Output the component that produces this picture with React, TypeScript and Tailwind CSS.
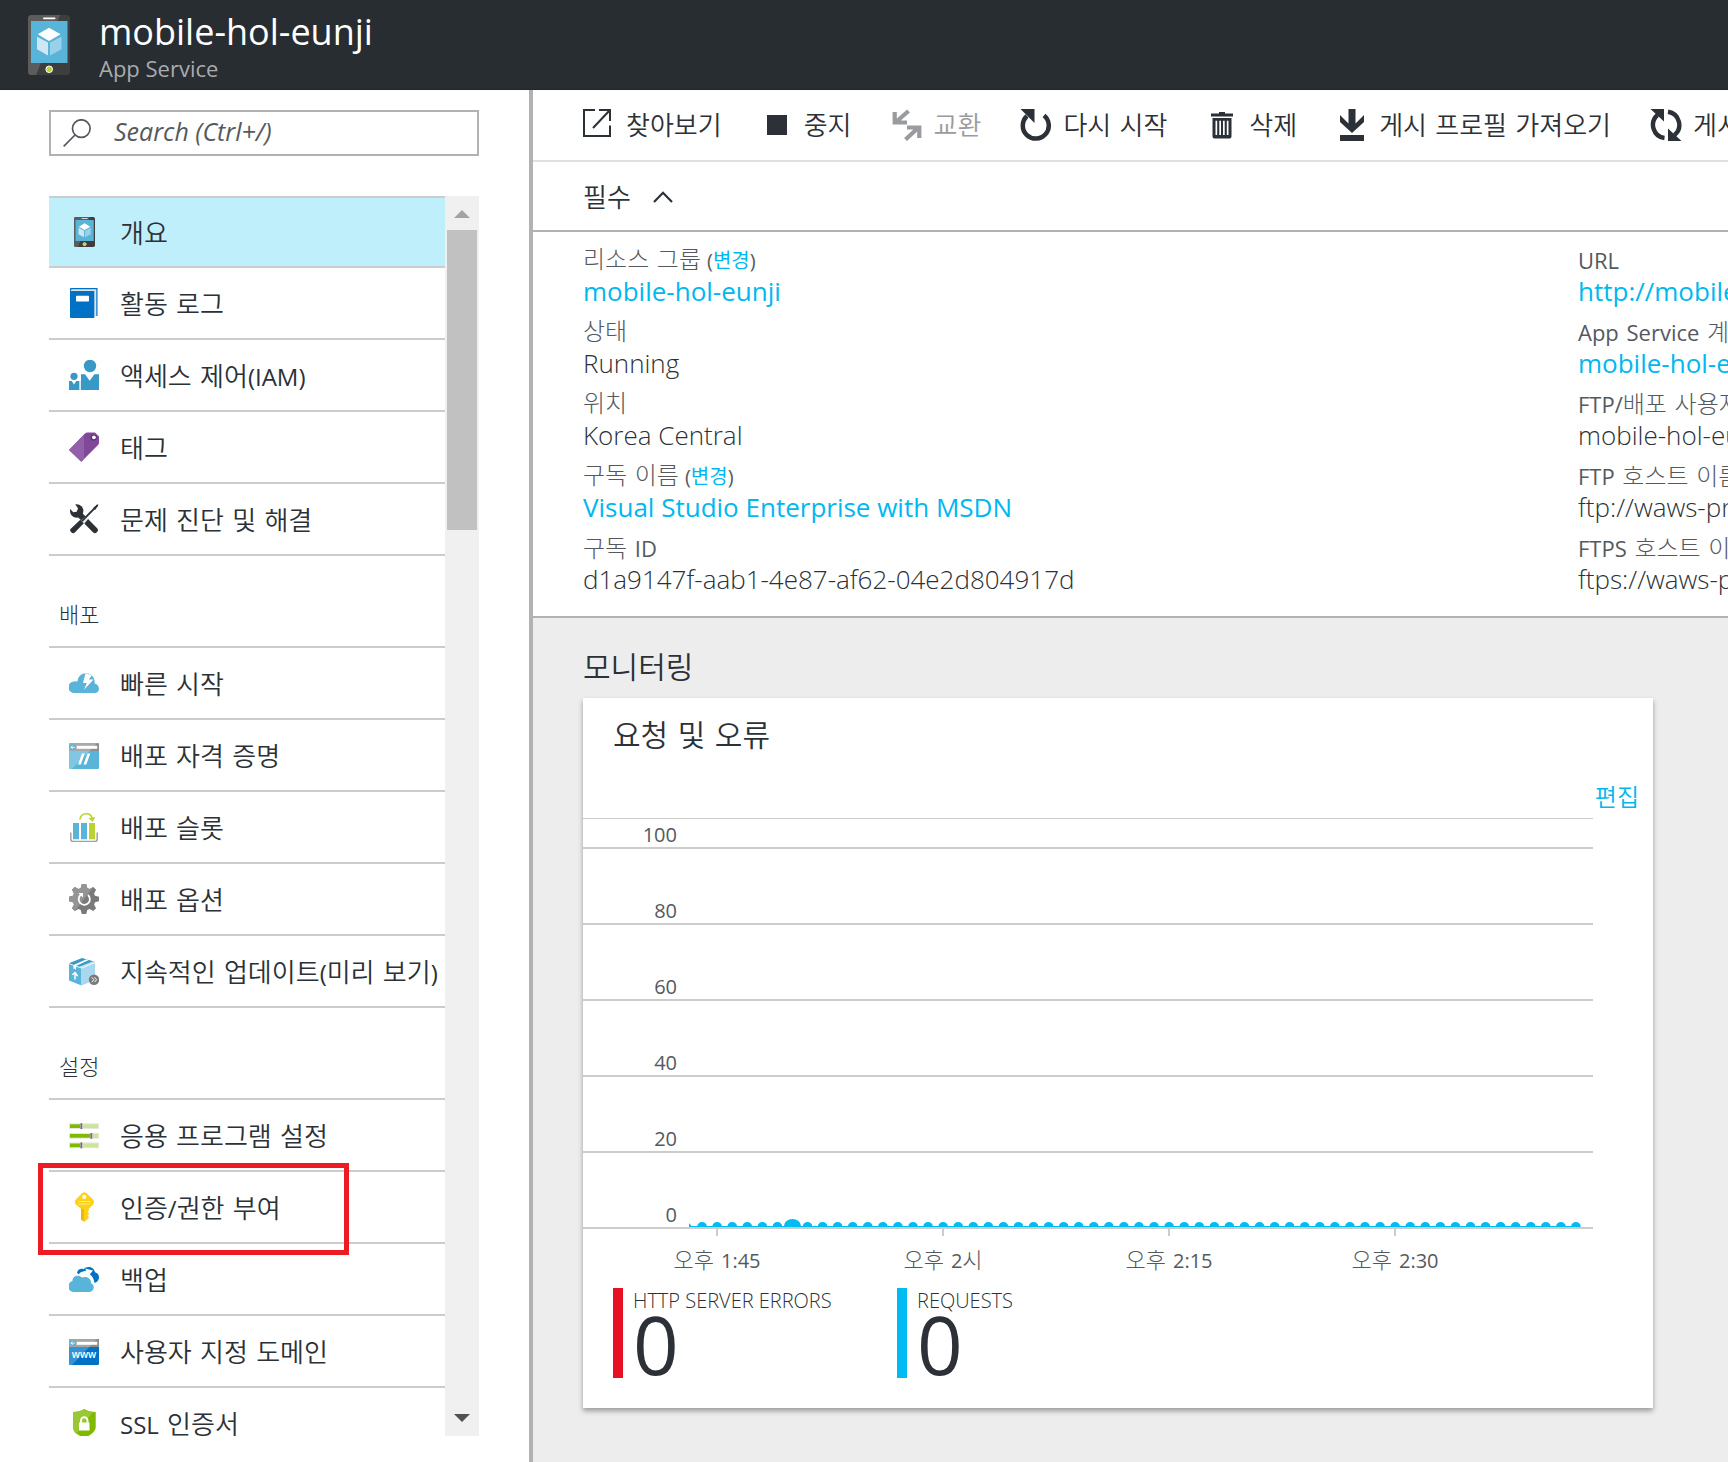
import React, { type ReactNode } from "react";

const HANGUL = "font-['DejaVu_Sans','Noto_Sans_CJK_KR',sans-serif]";
const LATIN = "font-['Open_Sans','Noto_Sans_CJK_KR',sans-serif]";

/* Hangul runs keep the parent's size; Latin runs take the size given in `latin`. */
function Mixed({ text, latin }: { text: string; latin: string }) {
  return (
    <>
      {text.split(/([A-Za-z0-9(),/:.-]+)/).map((part, i) =>
        i % 2 ? (
          <span key={i} className={`font-normal ${LATIN} ${latin}`}>
            {part}
          </span>
        ) : (
          part
        ),
      )}
    </>
  );
}

/* ---------- service icons ---------- */

function PhoneIcon({ className }: { className: string }) {
  return (
    <svg viewBox="0 0 42 60" className={className} aria-hidden="true">
      <rect width="42" height="60" rx="3.5" fill="#3e3e3e" />
      <path d="M3.5 0H32L8 60H3.5A3.5 3.5 0 0 1 0 56.5V3.5A3.5 3.5 0 0 1 3.5 0Z" fill="#5c5c5c" />
      <rect x="15" y="2.4" width="12.5" height="1.8" rx=".9" fill="#fff" />
      <rect x="3" y="6" width="36.5" height="42" fill="#59b4d9" />
      <path d="M21 12.7 32.6 19.3 21 26 9.8 19.3Z" fill="#fff" />
      <path d="M9 21.7 20 27.6V40.5L9 34.3Z" fill="#cde8f4" />
      <path d="M33.5 21.7 22 27.6V40.5L33.5 34.3Z" fill="#9ad1e8" />
      <circle cx="21.2" cy="54.3" r="3.3" fill="#b8d432" stroke="#fff" strokeWidth="1" />
    </svg>
  );
}

function Icon30({ children }: { children: ReactNode }) {
  return (
    <svg viewBox="0 0 30 30" className="h-[30px] w-[30px]" aria-hidden="true">
      {children}
    </svg>
  );
}

const icons: Record<string, ReactNode> = {
  phone: <PhoneIcon className="h-[30px] w-[21px]" />,
  book: (
    <Icon30>
      <path d="M2 0H28.500V28H26V3H1V1A1 1 0 0 1 2 0Z" fill="#0072c6" />
      <path d="M2.500 1.200H27.300V28.300H24V3H1.500Z" fill="#dfe3e6" />
      <path d="M1 2.500 2.500 3H25.300V30H2A1 1 0 0 1 1 29Z" fill="#0072c6" />
      <rect x="7" y="7.700" width="13" height="5.800" rx=".8" fill="#fff" />
    </Icon30>
  ),
  people: (
    <Icon30>
      <g fill="#3999c6">
        <circle cx="21" cy="6" r="6.200" />
        <circle cx="5" cy="16.300" r="3.600" />
        <path d="M12 14.300H16L20.700 20.800 25.300 14.300H30V30H12Z" />
        <path d="M0 21H2.800L5 24.500 7.300 21H10V30H0Z" />
      </g>
      <path d="M10 21H11.500V30H10Z" fill="#b5dcee" />
    </Icon30>
  ),
  tag: (
    <Icon30>
      <path d="M0 18 16 1.500Q17 .4 18.500 .4H26L30 4.500V10.500Q30 12 29 13L12.300 29.700Z" fill="#804998" />
      <path d="M0 18 15 2.500V27L12.300 29.700Z" fill="#9160a8" />
      <circle cx="24.700" cy="5.500" r="3.100" fill="#5b2f73" />
      <circle cx="24.900" cy="5.300" r="1.900" fill="#fff" />
    </Icon30>
  ),
  tools: (
    <Icon30>
      <path d="M8.500 8.500 25.800 26" stroke="#2b3137" strokeWidth="6" strokeLinecap="round" fill="none" />
      <circle cx="7.700" cy="7" r="6.700" fill="#2b3137" />
      <path d="M0 3.500V0H6L9 4.300 7.700 7.800 4.200 8.200Z" fill="#fff" />
      <path d="M19.300 10 23.500 9.700 15 20 12.300 16Z" fill="#fff" opacity=".9" />
      <path d="M28.600 1.200 13 17" stroke="#2b3137" strokeWidth="1.800" fill="none" />
      <path d="M29 .7 24.500 4 26 5.600Z" fill="#2b3137" stroke="#2b3137" strokeWidth=".8" />
      <path d="M11.300 15.800 14.800 19.300 5.800 28.600Q4 30.200 2 28 .3 26 1.800 24.800Z" fill="#2b3137" />
    </Icon30>
  ),
  quick: (
    <Icon30>
      <path
        d="M5.500 25A5.800 5.800 0 0 1 5 13.400Q6.800 13 8.500 13.600C8.800 8.500 12.500 5.300 17 5.300 22 5.300 26.200 9 25.700 15.600 28.300 16.200 30 18.500 30 20.700 30 23 28.300 25 26 25Z"
        fill="#59b4d9"
      />
      <path d="M16.500 5.300 23 7 19.800 11.500H24.500L15 21.700 17.800 15H14Z" fill="#fff" />
    </Icon30>
  ),
  browser: (
    <Icon30>
      <rect y="3.300" width="30" height="25.700" rx="1" fill="#59b4d9" />
      <path d="M1 3.300H29A1 1 0 0 1 30 4.300V11H0V4.300A1 1 0 0 1 1 3.300Z" fill="#8c8d8e" />
      <path d="M1 3.300H28L3 29H1A1 1 0 0 1 0 28V4.300A1 1 0 0 1 1 3.300Z" fill="#fff" opacity=".25" />
      <rect x="7.700" y="5.800" width="20.500" height="3" fill="#fff" />
      <circle cx="3.700" cy="7.300" r="3" fill="#59b4d9" />
      <path d="M5.700 7.300H2M3.700 5.600 2 7.300 3.700 9" stroke="#fff" strokeWidth=".9" fill="none" />
      <path d="M13 13.500H15.800L11.800 24.500H9Z M18.500 13.500H21.300L17.300 24.500H14.500Z" fill="#fff" />
    </Icon30>
  ),
  slots: (
    <Icon30>
      <path d="M1.800 20.500V27Q1.800 29.600 4.400 29.600H25.600Q28.200 29.600 28.200 27V20.500" stroke="#a0a1a2" strokeWidth="1.500" fill="none" />
      <path d="M4 11H10V27.300H4ZM12 11H18V27.300H12Z" fill="#59b4d9" />
      <rect x="20" y="11" width="6" height="16.300" fill="#b8d432" />
      <path d="M11 7.500C12 -.2 22 .2 23 6.500" stroke="#b8d432" strokeWidth="1.700" fill="none" />
      <path d="M19.600 6.200 26.400 5 23.600 10Z" fill="#b8d432" />
    </Icon30>
  ),
  gear: (
    <Icon30>
      <path
        d="M12.800 0H17.200L18.300 4 20.600 5 24.300 3 27.100 5.700 25.100 9.500 26 11.700 30 12.800V17.200L26 18.300 25.100 20.500 27.100 24.300 24.300 27.100 20.600 25.100 18.300 26 17.200 30H12.800L11.700 26 9.500 25.100 5.700 27.100 3 24.300 5 20.500 4 18.300 0 17.200V12.800L4 11.700 5 9.500 3 5.700 5.700 3 9.500 5 11.700 4Z"
        fill="#7a7a7a"
      />
      <path
        d="M12.800 0H17.200L18.300 4 20.600 5 24.300 3 5.700 27.100 3 24.300 5 20.500 4 18.300 0 17.200V12.800L4 11.700 5 9.500 3 5.700 5.700 3 9.500 5 11.700 4Z"
        fill="#949494"
      />
      <path d="M11.800 10.800A5.600 5.600 0 1 0 19 11" stroke="#fff" strokeWidth="1.800" fill="none" />
      <path d="M9.300 9H14V13.500Z" fill="#fff" />
    </Icon30>
  ),
  box: (
    <Icon30>
      <path d="M0 8 12.500 12.500V29.500L0 24.500Z" fill="#59b4d9" />
      <path d="M12.500 12.500 26 7V24L12.500 29.500Z" fill="#a9d8ee" />
      <path d="M0 7.300 13 2 26 5.800 12.500 11.500Z" fill="#3999c6" />
      <path d="M4.500 9 17.500 3.300 19.800 4 7 9.900V14L5.800 12.500 4.500 13Z" fill="#fff" />
      <path d="M10.200 10.800 24 5.200 26 5.800 12.500 11.500Z" fill="#fff" opacity=".7" />
      <path d="M6 23.500V17.500M3.300 18.800 6 16.500 8.700 20.300" stroke="#fff" strokeWidth="1.500" fill="none" />
      <circle cx="25" cy="23.700" r="5.200" fill="#7a7a7a" />
      <path d="M22.800 21.300 24.800 23.700 22.800 26.100M25.600 21.300 27.600 23.700 25.600 26.100" stroke="#fff" strokeWidth="1" fill="none" />
    </Icon30>
  ),
  sliders: (
    <Icon30>
      {[
        [3.3, 12],
        [13, 22],
        [22.5, 12],
      ].map(([y, x]) => (
        <g key={y}>
          <rect y={y} width="30" height="5.700" fill="#e3e8d8" />
          <rect x="1" y={y + 1} width={x - 2} height="3.700" fill="#7fba00" />
          <rect x={x + 2} y={y + 1} width={27 - x} height="3.700" fill="#cbe49a" />
          <rect x={x - 1} y={y} width="2.600" height="5.700" fill="#b5b5b5" />
          <rect x={x - 0.3} y={y} width="1.300" height="5.700" fill="#6e6e6e" />
        </g>
      ))}
    </Icon30>
  ),
  key: (
    <Icon30>
      <path d="M13 1.200Q15.300 -.6 17.600 1.200L24.200 7.700Q25.500 9.500 24.400 12.300L19.800 16.800V18.500L18.500 19.800 19.800 21V22.500L18.500 23.500 19.800 25V26L15.300 30 12 27.500V16.800L6.600 12.300Q5.200 9.500 6.600 7.700Z" fill="#fcd116" />
      <path d="M12 17H14.700V29.300L12 27.500Z" fill="#f3b300" />
      <circle cx="15.300" cy="4.900" r="2.100" fill="#fff" />
      <path d="M9.500 9.500H21.300M9.500 12H21.300" stroke="#fff" strokeWidth="1" opacity=".6" />
    </Icon30>
  ),
  backup: (
    <Icon30>
      <path d="M8 9C8.500 5.500 12 4 14.700 5.200 17 2 24.500 1.500 26 8.200 29.500 9 31 13 29.300 16 28 19 24 19.500 22 19Z" fill="#0072c6" />
      <path d="M7.500 14C9.500 8.500 14 7 17.500 6.800L16 4.500 24 6.500 19.500 12 18.700 9.500C22 10 25 14 25.500 19L23 22Z" fill="#fff" />
      <path d="M5.500 28A5.600 5.600 0 0 1 3.500 17C3 12.500 9 9.800 13 13.500 18.500 11.500 22.500 15 22 19.200 24.300 20 24.800 22 24.800 23.500 24.600 26.300 22.300 28 20 28Z" fill="#59b4d9" />
    </Icon30>
  ),
  www: (
    <Icon30>
      <rect y="3" width="30" height="26" rx="1" fill="#0072c6" />
      <path d="M1 3H29A1 1 0 0 1 30 4V11H0V4A1 1 0 0 1 1 3Z" fill="#8c8d8e" />
      <path d="M1 3H28L3 29H1A1 1 0 0 1 0 28V4A1 1 0 0 1 1 3Z" fill="#fff" opacity=".22" />
      <rect x="7.700" y="5.800" width="20.500" height="3" fill="#fff" />
      <circle cx="3.700" cy="7.200" r="3" fill="#59b4d9" />
      <path d="M5.700 7.200H2M3.700 5.500 2 7.200 3.700 8.900" stroke="#fff" strokeWidth=".9" fill="none" />
      <text x="15" y="22" textAnchor="middle" fill="#fff" fontSize="10" fontWeight="600" fontFamily="'Open Sans', sans-serif">
        www
      </text>
    </Icon30>
  ),
  shield: (
    <Icon30>
      <path d="M4 4Q11 4 15.300 1 19.600 4 26.700 4V19C26.700 24.500 20 28 15.300 29.800 10.500 28 4 24.500 4 19Z" fill="#7fba00" />
      <path d="M4 4Q11 4 15.300 1 19.600 4 24 4L7 26Q4 23 4 19Z" fill="#99c932" />
      <rect x="10" y="14.500" width="10.500" height="8" fill="#fff" />
      <path d="M12 15V12.500A3.200 3.200 0 0 1 18.500 12.500V15" stroke="#fff" strokeWidth="2" fill="none" />
    </Icon30>
  ),
};

/* ---------- toolbar icons ---------- */

function Icon32({ children }: { children: ReactNode }) {
  return (
    <svg viewBox="0 0 32 32" className="h-8 w-8 shrink-0" fill="none" stroke="none" aria-hidden="true">
      {children}
    </svg>
  );
}

const commands: { label: string; disabled?: boolean; icon: ReactNode }[] = [
  {
    label: "찾아보기",
    icon: (
      <Icon32>
        <path d="M12 1H1V27H27V16.500M16 1H27V12M27 1 10 19" stroke="#2b3137" strokeWidth="2" />
      </Icon32>
    ),
  },
  {
    label: "중지",
    icon: (
      <Icon32>
        <rect x="6" y="6" width="20" height="20" fill="#2b3137" />
      </Icon32>
    ),
  },
  {
    label: "교환",
    disabled: true,
    icon: (
      <Icon32>
        <path d="M17.500 2 5 13M3.700 3V13.500H16M14.500 30.500 27 19M16 18.500H28.300V29" stroke="#999b9e" strokeWidth="4.200" />
      </Icon32>
    ),
  },
  {
    label: "다시 시작",
    icon: (
      <Icon32>
        <path d="M24 6.500A13 13 0 1 1 7 7" stroke="#2b3137" strokeWidth="4.500" />
        <path d="M.5 0H14.500V14Z" fill="#2b3137" />
      </Icon32>
    ),
  },
  {
    label: "삭제",
    icon: (
      <Icon32>
        <path
          d="M13 3H19V4.500H27V7.500H5V4.500H13ZM6.500 9H25.500V27.500A2 2 0 0 1 23.500 29.500H8.500A2 2 0 0 1 6.500 27.500ZM9.500 11.800V26H11.200V11.800ZM13.300 11.800V26H15V11.800ZM17 11.800V26H18.700V11.800ZM20.800 11.800V26H22.500V11.800Z"
          fill="#2b3137"
          fillRule="evenodd"
        />
      </Icon32>
    ),
  },
  {
    label: "게시 프로필 가져오기",
    icon: (
      <Icon32>
        <path d="M12.500 0H19.500V14.500L28 6V13L16 24 4 13V6L12.500 14.500ZM4 26H28V32H4Z" fill="#2b3137" />
      </Icon32>
    ),
  },
  {
    label: "게시 프로필 다시 설정",
    icon: (
      <Icon32>
        <path d="M7.500 6A13.200 13.200 0 0 0 14.500 29M18 2.800A13.200 13.200 0 0 1 24.500 26" stroke="#2b3137" strokeWidth="4.400" />
        <path d="M.5 0H14V12.500ZM31.500 32H18V19.500Z" fill="#2b3137" />
      </Icon32>
    ),
  },
];

/* ---------- side menu ---------- */

type Item = { icon: string; label: string; active?: boolean; marked?: boolean };

const groups: { title?: string; items: Item[] }[] = [
  {
    items: [
      { icon: "phone", label: "개요", active: true },
      { icon: "book", label: "활동 로그" },
      { icon: "people", label: "액세스 제어(IAM)" },
      { icon: "tag", label: "태그" },
      { icon: "tools", label: "문제 진단 및 해결" },
    ],
  },
  {
    title: "배포",
    items: [
      { icon: "quick", label: "빠른 시작" },
      { icon: "browser", label: "배포 자격 증명" },
      { icon: "slots", label: "배포 슬롯" },
      { icon: "gear", label: "배포 옵션" },
      { icon: "box", label: "지속적인 업데이트(미리 보기)" },
    ],
  },
  {
    title: "설정",
    items: [
      { icon: "sliders", label: "응용 프로그램 설정" },
      { icon: "key", label: "인증/권한 부여", marked: true },
      { icon: "backup", label: "백업" },
      { icon: "www", label: "사용자 지정 도메인" },
      { icon: "shield", label: "SSL 인증서" },
    ],
  },
];

function Sidebar() {
  return (
    <aside className="flex w-[533px] shrink-0 flex-col border-r-4 border-[#b2b2b2] bg-white pt-5 pr-[50px] pb-[26px] pl-[49px]">
      <label className="flex h-[46px] shrink-0 items-center border-2 border-[#b2b2b2] pl-3">
        <svg viewBox="0 0 28 28" className="h-7 w-7 shrink-0" fill="none" stroke="#55595e" strokeWidth="1.700" aria-hidden="true">
          <circle cx="18.300" cy="9.600" r="8.800" />
          <path d="M12 16 .7 27.300" />
        </svg>
        <input
          type="text"
          aria-label="Search"
          placeholder="Search (Ctrl+/)"
          className={`ml-[23px] min-w-0 flex-1 bg-transparent pb-0.5 text-[25px] font-normal italic outline-none placeholder:text-[#55595e] ${LATIN}`}
        />
      </label>

      <div className="mt-10 flex min-h-0 flex-1">
        <nav className="min-w-0 flex-1 overflow-x-visible overflow-y-clip border-t-2 border-[#cccccc]">
          {groups.map((group, g) => (
            <section key={g}>
              {group.title && (
                <h2 className={`flex h-[92px] items-center border-b-2 border-[#cccccc] pt-7 pl-2.5 text-[22px] font-light text-[#2b3137] ${HANGUL}`}>
                  {group.title}
                </h2>
              )}
              <ul>
                {group.items.map((item) => (
                  <li key={item.label} className="relative">
                    <a
                      href="#"
                      className={`flex items-center gap-[21px] border-b-2 border-[#cccccc] pl-5 text-[26px] font-[350] whitespace-nowrap text-[#2b3137] ${HANGUL} ${item.active ? "h-[70px] bg-[#bfeffb]" : "h-[72px]"}`}
                    >
                      <span className="flex w-[30px] shrink-0 justify-center">{icons[item.icon]}</span>
                      <span className="pt-1">
                        <Mixed text={item.label} latin="text-[24px]" />
                      </span>
                    </a>
                    {item.marked && (
                      <span className="pointer-events-none absolute -top-[9px] -left-[11px] z-10 h-[92px] w-[311px] border-[5px] border-[#ed1c24]" />
                    )}
                  </li>
                ))}
              </ul>
            </section>
          ))}
        </nav>
        <div className="flex w-[34px] shrink-0 flex-col items-center bg-[#f0f0f0]" aria-hidden="true">
          <svg viewBox="0 0 16 8" className="mt-3.5 mb-3 h-2 w-4 shrink-0">
            <path d="M0 8 8 0 16 8Z" fill="#a3a3a3" />
          </svg>
          <div className="h-[300px] w-[30px] shrink-0 bg-[#c1c1c1]" />
          <svg viewBox="0 0 16 8" className="mt-auto mb-3.5 h-2 w-4 shrink-0">
            <path d="M0 0 8 8 16 0Z" fill="#505050" />
          </svg>
        </div>
      </div>
    </aside>
  );
}

/* ---------- essentials ---------- */

type Field = { label: string; value: string; link?: boolean; change?: boolean };

const leftFields: Field[] = [
  { label: "리소스 그룹", value: "mobile-hol-eunji", link: true, change: true },
  { label: "상태", value: "Running" },
  { label: "위치", value: "Korea Central" },
  { label: "구독 이름", value: "Visual Studio Enterprise with MSDN", link: true, change: true },
  { label: "구독 ID", value: "d1a9147f-aab1-4e87-af62-04e2d804917d" },
];

const rightFields: Field[] = [
  { label: "URL", value: "http://mobile-hol-eunji.azurewebsites.net", link: true },
  { label: "App Service 계획/가격 책정 계층", value: "mobile-hol-eunji-plan", link: true },
  { label: "FTP/배포 사용자 이름", value: "mobile-hol-eunji" },
  { label: "FTP 호스트 이름", value: "ftp://waws-prod-se1" },
  { label: "FTPS 호스트 이름", value: "ftps://waws-prod-se1" },
];

function Fields({ fields, className }: { fields: Field[]; className: string }) {
  return (
    <dl className={`flex flex-col gap-[9px] whitespace-nowrap ${className}`}>
      {fields.map((f) => (
        <div key={f.label}>
          <dt className={`h-[31px] text-2xl leading-8 font-light text-[#55595e] ${HANGUL}`}>
            <Mixed text={f.label} latin="text-[22px]" />
            {f.change && (
              <span className={`ml-1.5 text-[20px] font-normal ${LATIN}`}>
                (
                <a href="#" className="text-[#00b8f0]">
                  변경
                </a>
                )
              </span>
            )}
          </dt>
          <dd className={`h-8 text-[26px] leading-8 text-[#2b3137] ${f.link ? "font-normal" : "font-light"} ${LATIN}`}>
            {f.link ? (
              <a href="#" className="text-[#00b8f0]">
                {f.value}
              </a>
            ) : (
              f.value
            )}
          </dd>
        </div>
      ))}
    </dl>
  );
}

/* ---------- chart ---------- */

const STEP = 226 / 15;

function wavePath() {
  let d = "M0 8V4L2.5 7";
  for (let k = 1; k < 60; k++) {
    const c = -2 + k * STEP;
    const [rx, ry] = k === 7 ? [8.5, 7] : [4.7, 4];
    d += `H${c - rx}A${rx} ${ry} 0 0 1 ${c + rx} 7`;
  }
  return d + "V8Z";
}

function Chart() {
  return (
    <div className="relative mr-[60px] border-t border-[#cccccc]">
      {["100", "80", "60", "40", "20", "0"].map((n, i) => (
        <div
          key={n}
          className={`flex items-end border-b-2 border-[#cccccc] text-[20px] leading-6 font-normal text-[#55595e] ${LATIN} ${i === 0 ? "h-[30px]" : "h-[76px]"}`}
        >
          <span className="w-[94px] text-right">{n}</span>
        </div>
      ))}
      <svg viewBox="0 0 894 8" className="absolute bottom-0.5 left-[106px] h-2 w-[894px]" aria-hidden="true">
        <path d={wavePath()} fill="#00bcf2" />
      </svg>
    </div>
  );
}

function Metric({ name, value, bar }: { name: string; value: string; bar: string }) {
  return (
    <div className={`flex h-[90px] w-[284px] gap-2.5 whitespace-nowrap text-[#2b3137] ${LATIN}`}>
      <span className={`w-2.5 shrink-0 ${bar}`} />
      <div className="flex flex-col">
        <span className="text-[20px] leading-[26px] font-light">{name}</span>
        <span className="text-[80px] leading-[60px] font-normal">{value}</span>
      </div>
    </div>
  );
}

export default function App() {
  return (
    <div className="flex h-screen min-h-[1462px] flex-col overflow-hidden bg-white">
      <header className={`flex h-[90px] shrink-0 items-center border-b border-[#22252b] bg-[#282d31] pl-7 ${LATIN}`}>
        <PhoneIcon className="h-[60px] w-[42px]" />
        <div className="ml-[29px] flex flex-col">
          <h1 className="text-[36px] leading-[46px] font-normal text-white">mobile-hol-eunji</h1>
          <p className="text-[22px] leading-[26px] font-normal text-[#a9abad]">App Service</p>
        </div>
      </header>

      <div className="flex min-h-0 flex-1">
        <Sidebar />

        <main className="flex min-w-0 flex-1 flex-col overflow-hidden bg-[#ededed]">
          <div className="flex h-[72px] shrink-0 items-center gap-[39px] border-b-2 border-[#e0e0e0] bg-white pl-[50px]">
            {commands.map((c) => (
              <button
                key={c.label}
                type="button"
                disabled={c.disabled}
                className={`flex shrink-0 items-center gap-[11px] text-[26px] font-[350] whitespace-nowrap text-[#2b3137] disabled:text-[#999b9e] ${HANGUL}`}
              >
                {c.icon}
                <span className="pt-0.5">{c.label}</span>
              </button>
            ))}
          </div>

          <button
            type="button"
            className={`flex h-[70px] shrink-0 items-center gap-[22px] border-b-2 border-[#b2b2b2] bg-white pt-0.5 pl-[50px] text-[26px] font-[350] text-[#2b3137] ${HANGUL}`}
          >
            <span className="pt-0.5">필수</span>
            <svg viewBox="0 0 20 12" className="h-3 w-5" fill="none" stroke="#2b3137" strokeWidth="2.200" aria-hidden="true">
              <path d="M1 11 10 1.800 19 11" />
            </svg>
          </button>

          <div className="flex h-[386px] shrink-0 border-b-2 border-[#b2b2b2] bg-white pt-3 pl-[50px]">
            <Fields fields={leftFields} className="w-[995px] shrink-0" />
            <Fields fields={rightFields} className="shrink-0" />
          </div>

          <h2 className={`mt-7 ml-[50px] text-[30px] leading-[44px] font-[350] text-[#2b3137] ${HANGUL}`}>모니터링</h2>

          <section className="mt-2 ml-[50px] flex h-[710px] w-[1070px] shrink-0 flex-col bg-white pt-[18px] shadow-[0_3px_5px_rgba(0,0,0,0.35)]">
            <h3 className={`pl-[30px] text-[30px] leading-10 font-[350] text-[#2b3137] ${HANGUL}`}>요청 및 오류</h3>
            <div className={`mt-[22px] flex justify-end pr-3.5 text-2xl leading-10 font-[350] ${HANGUL}`}>
              <a href="#" className="text-[#00b8f0]">
                편집
              </a>
            </div>
            <Chart />
            <div className="flex pl-[21px]">
              {["오후 1:45", "오후 2시", "오후 2:15", "오후 2:30"].map((t) => (
                <div key={t} className="flex w-[226px] flex-col items-center">
                  <span className="h-[7px] w-0.5 bg-[#cccccc]" />
                  <span className={`mt-[9px] text-[22px] leading-8 font-light text-[#55595e] ${HANGUL}`}>
                    <Mixed text={t} latin="text-[20px]" />
                  </span>
                </div>
              ))}
            </div>
            <div className="mt-[11px] flex pl-[30px]">
              <Metric name="HTTP SERVER ERRORS" value="0" bar="bg-[#e81123]" />
              <Metric name="REQUESTS" value="0" bar="bg-[#00bcf2]" />
            </div>
          </section>
        </main>
      </div>
    </div>
  );
}
